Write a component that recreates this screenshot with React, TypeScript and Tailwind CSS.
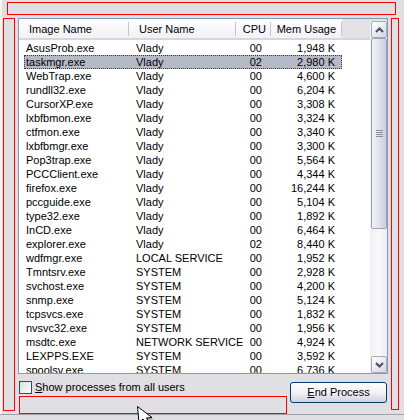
import React from 'react';

type Proc = [string, string, string, string];

const processes: Proc[] = [
  ['AsusProb.exe', 'Vlady', '00', '1,948 K'],
  ['taskmgr.exe', 'Vlady', '02', '2,980 K'],
  ['WebTrap.exe', 'Vlady', '00', '4,600 K'],
  ['rundll32.exe', 'Vlady', '00', '6,204 K'],
  ['CursorXP.exe', 'Vlady', '00', '3,308 K'],
  ['lxbfbmon.exe', 'Vlady', '00', '3,324 K'],
  ['ctfmon.exe', 'Vlady', '00', '3,340 K'],
  ['lxbfbmgr.exe', 'Vlady', '00', '3,300 K'],
  ['Pop3trap.exe', 'Vlady', '00', '5,564 K'],
  ['PCCClient.exe', 'Vlady', '00', '4,344 K'],
  ['firefox.exe', 'Vlady', '00', '16,244 K'],
  ['pccguide.exe', 'Vlady', '00', '5,104 K'],
  ['type32.exe', 'Vlady', '00', '1,892 K'],
  ['InCD.exe', 'Vlady', '00', '6,464 K'],
  ['explorer.exe', 'Vlady', '02', '8,440 K'],
  ['wdfmgr.exe', 'LOCAL SERVICE', '00', '1,952 K'],
  ['Tmntsrv.exe', 'SYSTEM', '00', '2,928 K'],
  ['svchost.exe', 'SYSTEM', '00', '4,200 K'],
  ['snmp.exe', 'SYSTEM', '00', '5,124 K'],
  ['tcpsvcs.exe', 'SYSTEM', '00', '1,832 K'],
  ['nvsvc32.exe', 'SYSTEM', '00', '1,956 K'],
  ['msdtc.exe', 'NETWORK SERVICE', '00', '4,924 K'],
  ['LEXPPS.EXE', 'SYSTEM', '00', '3,592 K'],
  ['spoolsv.exe', 'SYSTEM', '00', '6,736 K'],
];

const SELECTED = 'taskmgr.exe';

function Sep() {
  return <div className="w-px h-[14px] bg-[#c4c3d2] shrink-0" />;
}

function Header() {
  return (
    <div className="flex h-[22px] items-center pt-[2px] border-b-2 border-[#d6d5e1] bg-linear-to-b from-white to-[#f2f2f6]">
      <div className="w-[109px] pl-[10px]">Image Name</div>
      <Sep />
      <div className="w-[106px] pl-[10px]">User Name</div>
      <Sep />
      <div className="w-[34px] text-right pr-[4px]">CPU</div>
      <Sep />
      <div className="w-[70px] text-right pr-[5px]">Mem Usage</div>
      <Sep />
      <div className="flex-1 self-stretch -mt-[2px] bg-[#e3e3e6]" />
    </div>
  );
}

function Row({ proc }: { proc: Proc }) {
  const [name, user, cpu, mem] = proc;
  const sel = name === SELECTED;
  return (
    <div
      className={
        'ml-[5px] w-[318px] h-[14px] leading-[14px] flex shrink-0 whitespace-nowrap ' +
        (sel ? 'bg-[#b6b9c6] outline-1 outline-dotted -outline-offset-1 outline-[#3a3a3a]' : '')
      }
    >
      <div className="w-[110px] pl-[2px]">{name}</div>
      <div className="w-[107px] pl-[2px]">{user}</div>
      <div className="w-[21px] text-right">{cpu}</div>
      <div className="w-[73px] text-right">{mem}</div>
    </div>
  );
}

function Chevron({ down }: { down?: boolean }) {
  return (
    <svg width="9" height="6" viewBox="0 0 9 6" className={down ? 'rotate-180' : ''}>
      <polyline points="1,5 4.5,1.5 8,5" fill="none" stroke="#4b4b5e" strokeWidth="2" />
    </svg>
  );
}

function ScrollButton({ down }: { down?: boolean }) {
  return (
    <div className="h-[17px] w-[16px] ml-px rounded-[2px] border border-[#a9a8bd] bg-linear-to-br from-white to-[#d6d6e3] flex items-center justify-center shrink-0">
      <Chevron down={down} />
    </div>
  );
}

function Scrollbar() {
  return (
    <div className="w-[17px] flex flex-col bg-linear-to-r from-[#eeeef3] via-[#fafafc] to-[#ececf1]">
      <div className="h-[2px] bg-[#e3e3e6]" />
      <ScrollButton />
      <div className="h-[191px] w-[16px] ml-px rounded-[2px] border border-[#9f9eb4] bg-linear-to-r from-[#f1f1f7] via-[#e2e2ec] to-[#cdcddc] flex flex-col items-center justify-center gap-px shrink-0">
        {[0, 1, 2, 3].map((i) => (
          <div key={i} className="w-[7px] h-px bg-[#8d8ca3]" />
        ))}
      </div>
      <div className="flex-1" />
      <ScrollButton down />
    </div>
  );
}

function Cursor() {
  return (
    <svg width="20" height="24" viewBox="0 0 20 24" className="absolute left-[137px] top-[406px]">
      <path d="M2 2 L4 19 L8 15 L12 22 L15 20.5 L11.5 14 L17 13.5 Z" fill="#8a8a8a" opacity="0.5" />
      <path d="M0.5 0.5 L2 17 L6 13 L10 20 L13 18.5 L9.5 12 L15 11.5 Z" fill="white" stroke="black" strokeWidth="1" strokeLinejoin="round" />
    </svg>
  );
}

export default function App() {
  return (
    <div className="relative w-[404px] h-[420px] overflow-hidden bg-[#e0dfe3] text-black text-[11px] font-['Liberation_Sans',Arial,sans-serif]">
      <div className="h-[414px] border-l-2 border-[#f6f5f0] flex flex-col">
        <div className="mt-[2px] ml-[5px] w-[389px] h-[13px] border border-[#ff0000]" />
        <div className="mt-[3px] flex">
          <div className="ml-px w-[12px] h-[393px] border border-[#ff0000]" />
          <div className="ml-[3px] w-[370px] flex flex-col">
            <div className="h-[356px] border border-[#7f9db9] bg-white flex overflow-hidden">
              <div className="flex-1 flex flex-col overflow-hidden">
                <Header />
                <div className="mt-px flex flex-col">
                  {processes.map((p) => (
                    <Row key={p[0]} proc={p} />
                  ))}
                </div>
              </div>
              <Scrollbar />
            </div>
            <div className="flex justify-between">
              <div className="ml-px flex flex-col">
                <div className="mt-[7px] flex items-center gap-[3px] h-[13px]">
                  <div className="w-[13px] h-[13px] border border-[#1c5180] bg-linear-to-br from-[#dcdcd7] to-white" />
                  <span className="whitespace-nowrap">
                    <span className="underline">S</span>how processes from all users
                  </span>
                </div>
                <div className="mt-[2px] w-[268px] h-[18px] border border-[#ff0000]" />
              </div>
              <button className="mt-[8px] mr-px w-[97px] h-[21px] rounded-[3px] border border-[#003c74] bg-linear-to-b from-white via-[#f1f1f5] to-[#d3d1df] flex items-center justify-center">
                <span>
                  <span className="underline">E</span>nd Process
                </span>
              </button>
            </div>
          </div>
          <div className="ml-[3px] w-[8px] h-[392px] border border-[#ff0000]" />
        </div>
      </div>
      <div className="h-px bg-[#a2a2a8]" />
      <Cursor />
    </div>
  );
}
